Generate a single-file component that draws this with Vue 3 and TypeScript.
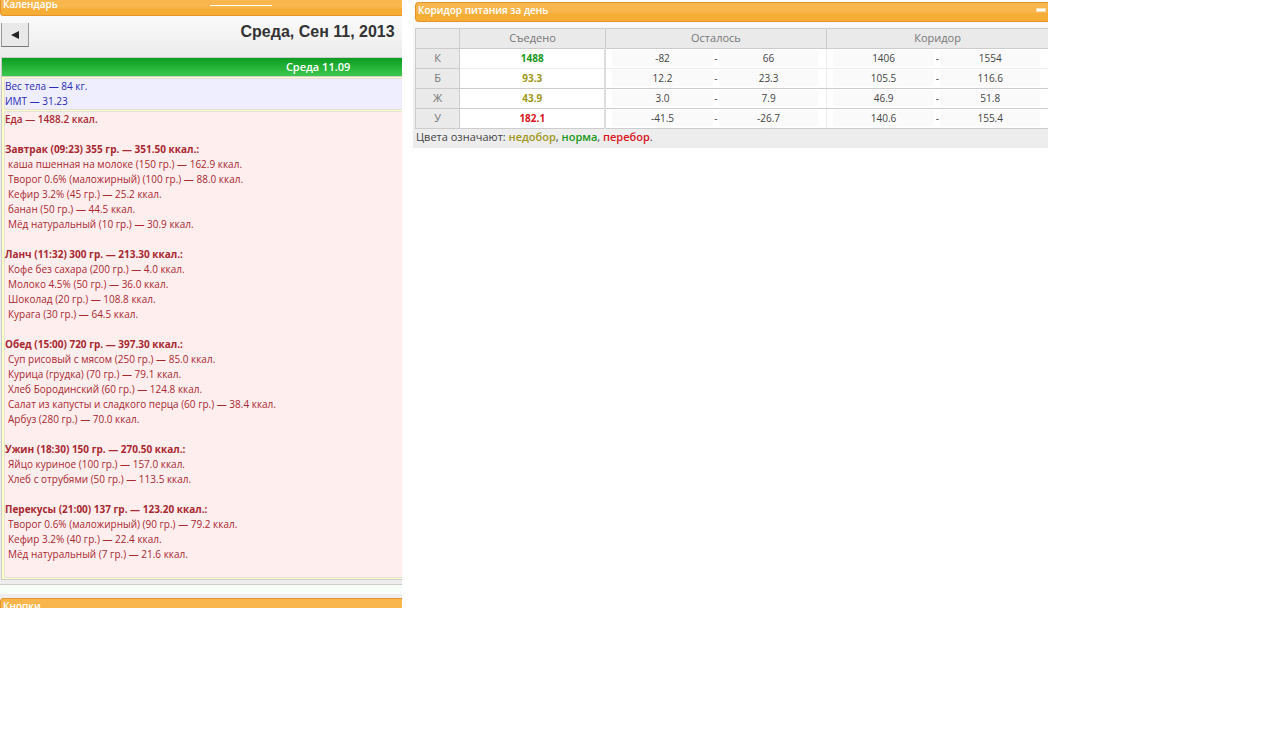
<script setup lang="ts">
interface Meal {
  title: string
  items: string[]
}

interface Nutrient {
  name: string
  eaten: string
  status: 'low' | 'ok' | 'high'
  left: [string, string]
  corridor: [string, string]
}

const meals: Meal[] = [
  {
    title: 'Завтрак (09:23) 355 гр. — 351.50 ккал.:',
    items: [
      'каша пшенная на молоке (150 гр.) — 162.9 ккал.',
      'Творог 0.6% (маложирный) (100 гр.) — 88.0 ккал.',
      'Кефир 3.2% (45 гр.) — 25.2 ккал.',
      'банан (50 гр.) — 44.5 ккал.',
      'Мёд натуральный (10 гр.) — 30.9 ккал.',
    ],
  },
  {
    title: 'Ланч (11:32) 300 гр. — 213.30 ккал.:',
    items: [
      'Кофе без сахара (200 гр.) — 4.0 ккал.',
      'Молоко 4.5% (50 гр.) — 36.0 ккал.',
      'Шоколад (20 гр.) — 108.8 ккал.',
      'Курага (30 гр.) — 64.5 ккал.',
    ],
  },
  {
    title: 'Обед (15:00) 720 гр. — 397.30 ккал.:',
    items: [
      'Суп рисовый с мясом (250 гр.) — 85.0 ккал.',
      'Курица (грудка) (70 гр.) — 79.1 ккал.',
      'Хлеб Бородинский (60 гр.) — 124.8 ккал.',
      'Салат из капусты и сладкого перца (60 гр.) — 38.4 ккал.',
      'Арбуз (280 гр.) — 70.0 ккал.',
    ],
  },
  {
    title: 'Ужин (18:30) 150 гр. — 270.50 ккал.:',
    items: ['Яйцо куриное (100 гр.) — 157.0 ккал.', 'Хлеб с отрубями (50 гр.) — 113.5 ккал.'],
  },
  {
    title: 'Перекусы (21:00) 137 гр. — 123.20 ккал.:',
    items: [
      'Творог 0.6% (маложирный) (90 гр.) — 79.2 ккал.',
      'Кефир 3.2% (40 гр.) — 22.4 ккал.',
      'Мёд натуральный (7 гр.) — 21.6 ккал.',
    ],
  },
]

const nutrients: Nutrient[] = [
  { name: 'К', eaten: '1488', status: 'ok', left: ['-82', '66'], corridor: ['1406', '1554'] },
  { name: 'Б', eaten: '93.3', status: 'low', left: ['12.2', '23.3'], corridor: ['105.5', '116.6'] },
  { name: 'Ж', eaten: '43.9', status: 'low', left: ['3.0', '7.9'], corridor: ['46.9', '51.8'] },
  { name: 'У', eaten: '182.1', status: 'high', left: ['-41.5', '-26.7'], corridor: ['140.6', '155.4'] },
]
</script>

<template>
  <main class="page">
    <section class="diary">
      <div class="diary-inner">
        <header class="bar bar-top">
          <span>Календарь</span>
          <i class="bar-line"></i>
        </header>
        <div class="date-row">
          <button class="prev" type="button" aria-label="Предыдущий день">
            <svg viewBox="0 0 8 8" width="8" height="8"><path d="M0 4 8 0V8Z" fill="#222" /></svg>
          </button>
          <h1>Среда, Сен 11, 2013</h1>
        </div>
        <article class="day">
          <h2>Среда 11.09</h2>
          <div class="entries">
            <div class="body-box">
              <p>Вес тела — 84 кг.</p>
              <p>ИМТ — 31.23</p>
            </div>
            <div class="food-box">
              <p class="total">Еда — 1488.2 ккал.</p>
              <div v-for="meal in meals" :key="meal.title" class="meal">
                <h3>{{ meal.title }}</h3>
                <ul>
                  <li v-for="item in meal.items" :key="item">{{ item }}</li>
                </ul>
              </div>
            </div>
          </div>
        </article>
        <div class="strip"></div>
        <header class="bar bar-bottom"><span>Кнопки</span></header>
      </div>
    </section>

    <section class="corridor">
      <header class="bar bar-main">
        <span>Коридор питания за день</span>
        <button class="collapse" type="button" aria-label="Свернуть"></button>
      </header>
      <table>
        <colgroup>
          <col class="c-name" />
          <col class="c-eaten" />
          <col class="c-num" />
          <col class="c-dash" />
          <col class="c-num" />
          <col class="c-num" />
          <col class="c-dash" />
          <col class="c-num" />
        </colgroup>
        <thead>
          <tr>
            <th></th>
            <th>Съедено</th>
            <th colspan="3">Осталось</th>
            <th colspan="3">Коридор</th>
          </tr>
        </thead>
        <tbody>
          <tr v-for="n in nutrients" :key="n.name">
            <th scope="row">{{ n.name }}</th>
            <td class="eaten" :class="n.status">{{ n.eaten }}</td>
            <td class="from"><span>{{ n.left[0] }}</span></td>
            <td>-</td>
            <td class="to"><span>{{ n.left[1] }}</span></td>
            <td class="from"><span>{{ n.corridor[0] }}</span></td>
            <td>-</td>
            <td class="to last"><span>{{ n.corridor[1] }}</span></td>
          </tr>
        </tbody>
      </table>
      <p class="legend">
        Цвета означают: <span class="low">недобор</span>, <span class="ok">норма</span>,
        <span class="high">перебор</span>.
      </p>
    </section>
  </main>
</template>

<style>
body {
  margin: 0;
  background: #fff;
}
</style>

<style scoped>
.page {
  display: grid;
  grid-template-columns: 402fr 635fr;
  column-gap: 11px;
  align-items: start;
  padding-right: 18.125%;
  font: 10px/15px "Open Sans", "Noto Sans", sans-serif;
  color: #444;
}
h1,
h2,
h3,
p,
ul {
  margin: 0;
  padding: 0;
}
ul {
  list-style: none;
}
.diary {
  overflow: hidden;
  background: #ededed;
}
.diary-inner {
  width: 158%;
}
.bar {
  box-sizing: border-box;
  display: flex;
  border: 1px solid #e5932b;
  background: linear-gradient(#f8b64c 45%, #f6ad36 65%);
  color: #fff;
  font-size: 10px;
  font-weight: 600;
}
.bar-top {
  position: relative;
  height: 16px;
  border-top: 0;
  border-radius: 0 0 4px 4px;
  padding-left: 2px;
  line-height: 9px;
}
.bar-line {
  position: absolute;
  left: 33%;
  top: 5px;
  width: 62px;
  height: 1px;
  background: #fff;
}
.date-row {
  display: grid;
  grid-template-columns: 28px 1fr 28px;
  align-items: start;
  height: 34px;
  padding: 7px 1px 0;
  background: linear-gradient(#fafafa, #ececec);
}
.prev {
  height: 24px;
  padding: 0;
  border: 1px solid #999;
  border-top: 0;
  border-bottom-color: #777;
  background: #e9e9e9;
  line-height: 8px;
}
h1 {
  font: bold 16px/17px "Liberation Sans", sans-serif;
  color: #333;
  text-align: center;
}
.day {
  margin-left: 1px;
  border: 1px solid #ccc;
}
h2 {
  height: 18px;
  background: linear-gradient(#0c9c22, #3cc84c);
  color: #fff;
  font-size: 11px;
  line-height: 17px;
  font-weight: 600;
  text-align: center;
}
.entries {
  border-top: 1px solid #ccc;
  padding: 1px 2px;
  background: #ffffc8;
}
.body-box,
.food-box {
  border: 1px solid #e2e2d8;
  border-right: 0;
  border-radius: 2px;
}
.body-box {
  margin-bottom: 1px;
  background: #eeeeff;
  color: #2a2ab4;
  font-weight: 500;
}
.food-box {
  padding-bottom: 15px;
  background: #ffeeee;
  color: #a82830;
}
.total {
  font-weight: 600;
}
h3 {
  font-size: 10px;
  font-weight: 700;
}
.meal {
  padding-top: 15px;
}
li {
  padding-left: 3px;
}
.strip {
  height: 9px;
  margin-top: 4px;
  border-top: 1px solid #ccc;
  border-bottom: 4px solid #eee;
  background: #f8fff8;
}
.bar-bottom {
  height: 10px;
  overflow: hidden;
  border-bottom: 0;
  border-radius: 4px 4px 0 0;
  padding-left: 2px;
  background: #f8b64c;
}
.corridor {
  margin-top: 2px;
  padding-left: 2px;
  background: linear-gradient(#fafafa, #ececec);
}
.bar-main {
  height: 20px;
  justify-content: space-between;
  border-right: 0;
  border-radius: 4px 0 0 4px;
  padding: 0 2px;
  line-height: 14px;
}
.collapse {
  width: 10px;
  height: 4px;
  margin-top: 5px;
  padding: 0;
  border: 1px solid #fbe0b0;
  background: #fff;
}
table {
  width: 100%;
  margin: 6px 0 0;
  border-collapse: collapse;
  table-layout: fixed;
  background: #fff;
  font-size: 10px;
}
.c-name {
  width: 7%;
}
.c-eaten {
  width: 23%;
}
.c-num {
  width: 17%;
}
.c-dash {
  width: 1%;
}
th,
td {
  box-sizing: border-box;
  height: 20px;
  padding: 0 0 2px;
  border-top: 1px solid #ccc;
  border-bottom: 1px solid #ccc;
  text-align: center;
  line-height: 16px;
}
th {
  border: 1px solid #ccc;
  background: #eaeaea;
  color: #777;
  font-size: 11px;
  font-weight: 400;
}
thead th {
  font-weight: 500;
}
thead th:last-child {
  border-right: 0;
}
tbody tr:first-child td {
  border-bottom-color: #eee;
}
tbody tr:nth-child(2) td {
  border-top-color: #eee;
}
td span {
  display: block;
  background: #fafafa;
}
.eaten {
  border-right: 2px solid #ddd;
  font-weight: 700;
}
.from span {
  margin-left: 6px;
}
.to span {
  margin-right: 8px;
}
.to {
  border-right: 1px solid #eee;
}
.last {
  border-right: 0;
}
.low {
  color: #a09820;
}
.ok {
  color: #189818;
}
.high {
  color: #d81420;
}
.legend {
  padding: 0 1px 3px;
  font-size: 11px;
  line-height: 16px;
  font-weight: 500;
}
.legend span {
  font-weight: 600;
}
</style>
